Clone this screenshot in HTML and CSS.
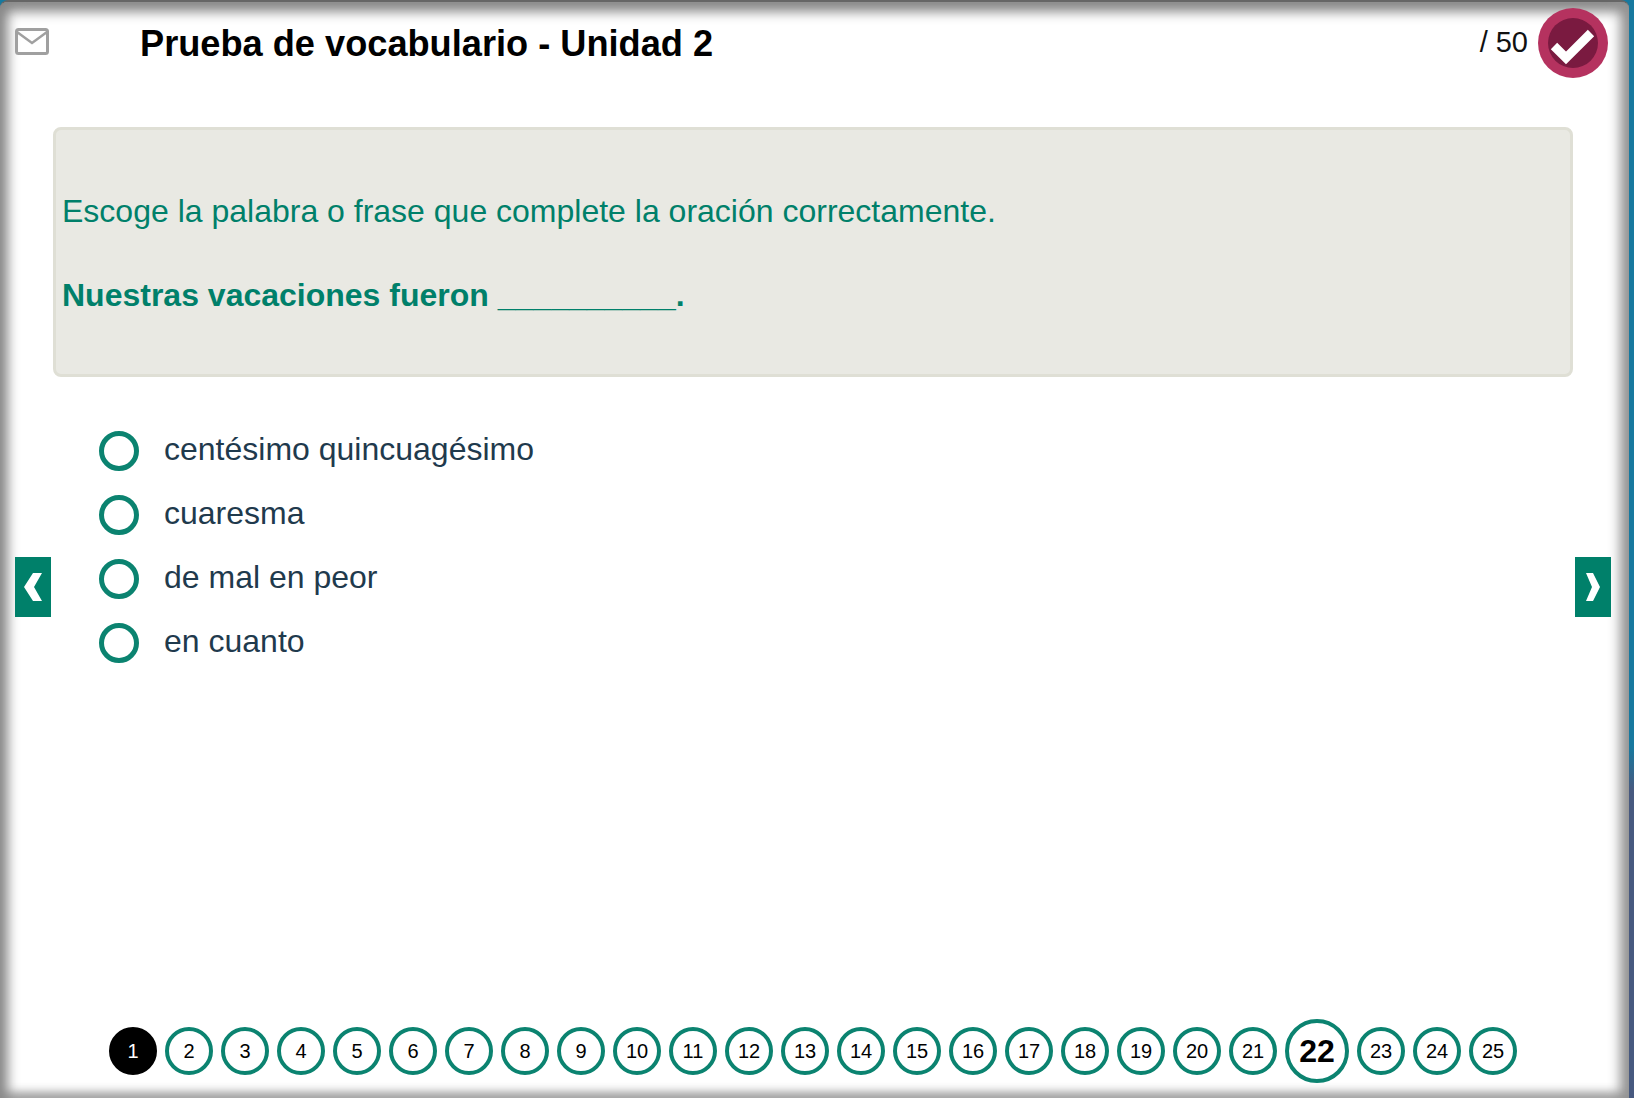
FILE: index.html
```html
<!DOCTYPE html>
<html lang="es">
<head>
    <meta charset="UTF-8">
    <title>Prueba de vocabulario - Unidad 2</title>
    <link rel="stylesheet" href="styles.css">
</head>
<body>

<div class="window">
    <div class="top-bar">
        <svg class="mail-icon" viewBox="0 0 34 27" width="34" height="27">
            <rect x="1.5" y="1.5" width="31" height="24" rx="2" fill="none" stroke="#a0a0a0" stroke-width="3"/>
            <path d="M2 4 L17 15 L32 4" fill="none" stroke="#a0a0a0" stroke-width="2.5"/>
        </svg>
        <h1 class="quiz-title">Prueba de vocabulario - Unidad 2</h1>
        <span class="score">/ 50</span>
        <svg class="done-icon" viewBox="0 0 70 70" width="70" height="70">
            <circle cx="35" cy="35" r="35" fill="#b5325f"/>
            <circle cx="35" cy="35" r="25" fill="#7a1a40"/>
            <path d="M16 38 L28 50 L53 25" fill="none" stroke="#fff" stroke-width="9"/>
        </svg>
    </div>

    <div class="question-box">
        <p class="instruction">Escoge la palabra o frase que complete la oración correctamente.</p>
        <p class="question">Nuestras vacaciones fueron __________.</p>
    </div>

    <!-- answers -->
    <div class="answers">
        <div class="answer"><span class="radio"></span>centésimo quincuagésimo</div>
        <div class="answer"><span class="radio"></span>cuaresma</div>
        <div class="answer"><span class="radio"></span>de mal en peor</div>
        <div class="answer"><span class="radio"></span>en cuanto</div>
    </div>

    <div class="arrow arrow-prev">
        <svg viewBox="0 0 20 28" width="20" height="28"><path d="M10 0 H19 L11 14 L19 28 H10 L1 14 Z" fill="#fff"/></svg>
    </div>
    <div class="arrow arrow-next">
        <svg viewBox="0 0 14 28" width="14" height="28"><path d="M0 0 H7 L14 14 L7 28 H0 L6 14 Z" fill="#fff"/></svg>
    </div>

    <div class="pager">
        <span class="page first">1</span>
        <span class="page">2</span>
        <span class="page">3</span>
        <span class="page">4</span>
        <span class="page">5</span>
        <span class="page">6</span>
        <span class="page">7</span>
        <span class="page">8</span>
        <span class="page">9</span>
        <span class="page">10</span>
        <span class="page">11</span>
        <span class="page">12</span>
        <span class="page">13</span>
        <span class="page">14</span>
        <span class="page">15</span>
        <span class="page">16</span>
        <span class="page">17</span>
        <span class="page">18</span>
        <span class="page">19</span>
        <span class="page">20</span>
        <span class="page">21</span>
        <span class="page current">22</span>
        <span class="page">23</span>
        <span class="page">24</span>
        <span class="page">25</span>
    </div>
</div>

</body>
</html>
```
FILE: styles.css
```css
html, body {
    margin: 0;
    height: 100%;
}
body {
    font-family: "Liberation Sans", Arial, sans-serif;
    background: linear-gradient(#17799f 0, #17799f 68%, #47597f 72%, #47597f 100%);
    overflow: hidden;
}
.window {
    position: relative;
    box-sizing: border-box;
    width: 1629px;
    height: 1098px;
    padding-top: 2px;
    background-color: #fff;
    border-top: 2px solid #666;
    border-top-left-radius: 8px;
    border-top-right-radius: 8px;
    box-shadow: inset 13px 0 12px -5px #8a8a8a, inset -15px 0 12px -6px #949494, inset 0 16px 12px -6px #8c8c8c, inset 0 -11px 8px -4px #b0b0b0;
    display: flex;
    flex-direction: column;
}

/* top bar */
.top-bar {
    display: flex;
    align-items: center;
    height: 78px;
    padding: 0 21px 0 15px;
}
.mail-icon {
    margin-bottom: 4px;
}
.quiz-title {
    margin: 2px 0 0 91px;
    font-size: 36.2px;
    font-weight: bold;
    color: #000;
    flex: 1;
}
.score {
    font-size: 29px;
    color: #111;
    margin-right: 10px;
    margin-bottom: 2px;
}

/* question box */
.question-box {
    box-sizing: border-box;
    margin: 45px 56px 0 53px;
    height: 250px;
    padding: 63px 6px 0;
    background-color: #e9e9e3;
    border: 3px solid #dfdfd5;
    border-radius: 8px;
    color: #00806a;
    font-size: 32px;
}
.instruction {
    margin: 0;
}
.question {
    margin: 47px 0 0;
    font-weight: bold;
}

/* answers */
.answers {
    margin: 40px 0 0 99px;
}
.answer {
    display: flex;
    align-items: center;
    height: 64px;
    font-size: 32px;
    color: #1f3a4d;
}
.radio {
    box-sizing: border-box;
    width: 40px;
    height: 40px;
    margin: 3px 25px 0 0;
    border: 5px solid #0b8370;
    border-radius: 50%;
}

/* prev and next */
.arrow {
    position: absolute;
    top: 555px;
    width: 36px;
    height: 60px;
    background-color: #00806a;
    display: flex;
    align-items: center;
    justify-content: center;
}
.arrow-prev {
    left: 15px;
}
.arrow-next {
    left: 1575px;
}

/* page numbers */
.pager {
    margin-top: auto;
    margin-bottom: 15px;
    padding-left: 109px;
    display: flex;
    align-items: center;
    gap: 8px;
}
.page {
    box-sizing: border-box;
    width: 48px;
    height: 48px;
    border: 4px solid #0b8370;
    border-radius: 50%;
    background-color: #fff;
    color: #000;
    font-size: 20px;
    display: flex;
    align-items: center;
    justify-content: center;
}
.page.first {
    background-color: #000;
    border-color: #000;
    color: #fff;
}
.page.current {
    width: 64px;
    height: 64px;
    font-size: 32px;
    font-weight: bold;
}
```
